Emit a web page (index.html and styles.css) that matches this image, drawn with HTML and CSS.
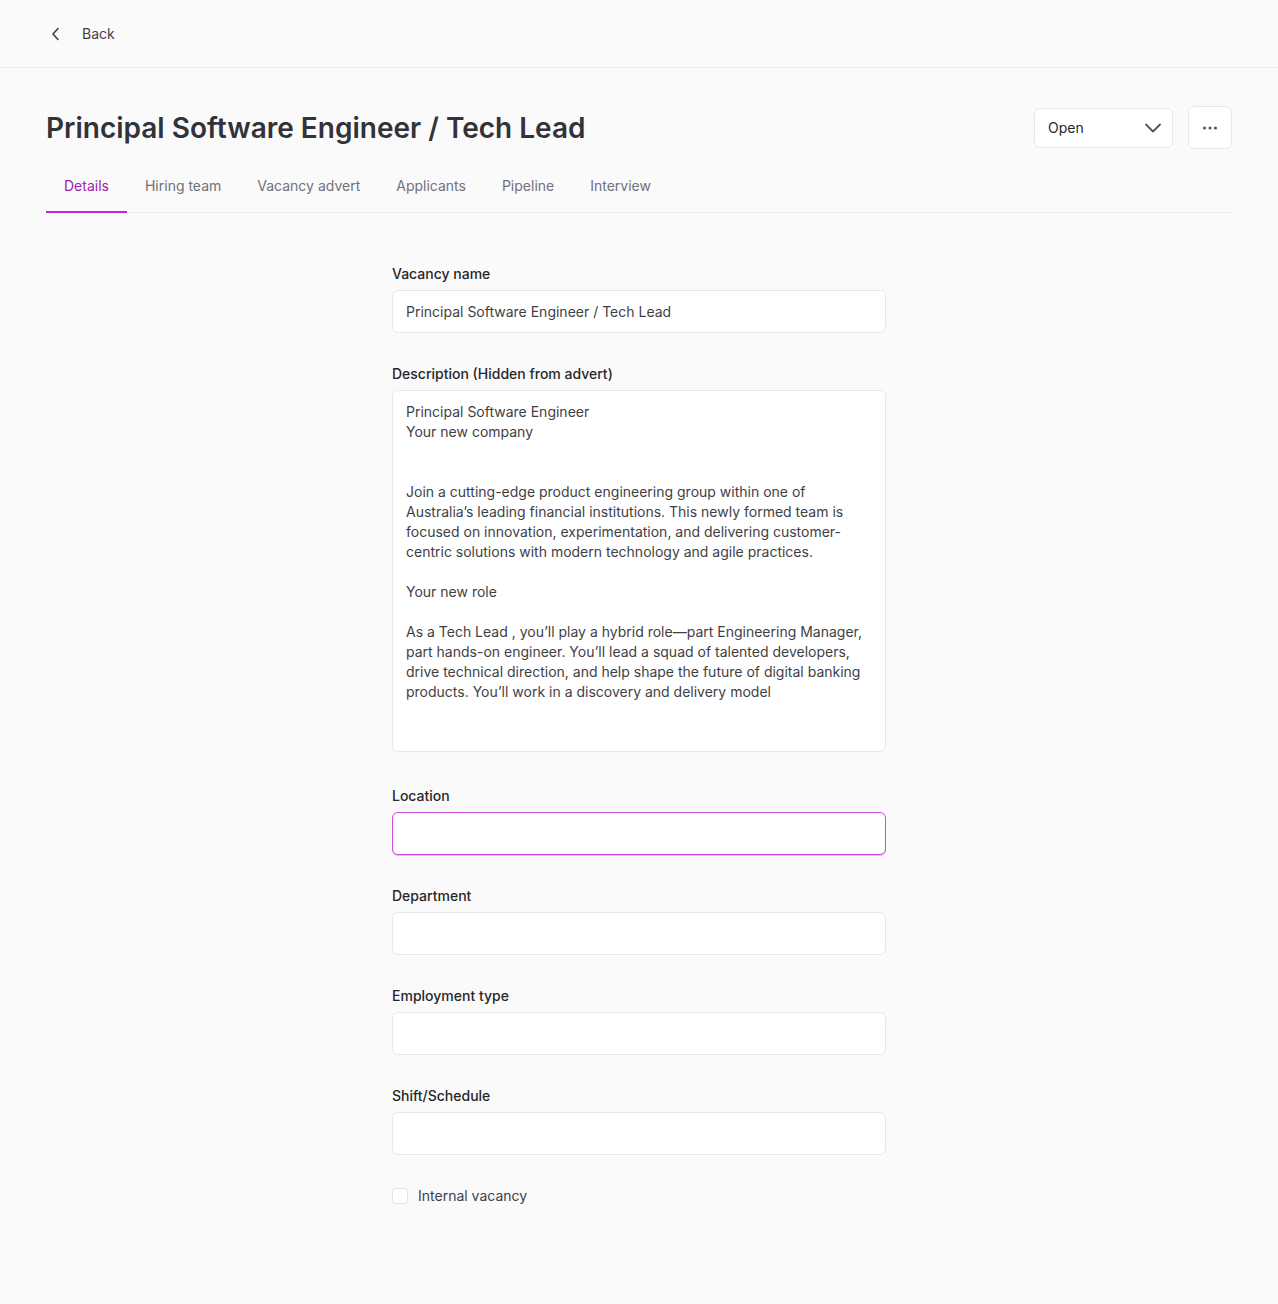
FILE: index.html
```html
<!DOCTYPE html>
<html lang="en">
<head>
    <meta charset="UTF-8">
    <meta name="viewport" content="width=device-width, initial-scale=1.0">
    <title>Principal Software Engineer / Tech Lead</title>
    <link rel="stylesheet" href="styles.css">
</head>
<body>
    <header class="topbar">
        <a class="back-link" href="#">
            <svg width="16" height="16" viewBox="0 0 16 16" fill="none" stroke="currentColor" stroke-width="1.6" stroke-linecap="round" stroke-linejoin="round">
                <path d="M10 2.5 L5 8 L10 13.5"/>
            </svg>
            <span>Back</span>
        </a>
    </header>

    <main class="page">
        <div class="title-row">
            <h1>Principal Software Engineer / Tech Lead</h1>
            <div class="title-actions">
                <button class="status-select">
                    <span>Open</span>
                    <svg width="20" height="20" viewBox="0 0 20 20" fill="none" stroke="currentColor" stroke-width="1.8" stroke-linecap="round" stroke-linejoin="round">
                        <path d="M3 6.5 L10 13.5 L17 6.5"/>
                    </svg>
                </button>
                <button class="more-button">
                    <svg width="16" height="4" viewBox="0 0 16 4" fill="currentColor">
                        <circle cx="2.5" cy="2" r="1.5"/>
                        <circle cx="8" cy="2" r="1.5"/>
                        <circle cx="13.5" cy="2" r="1.5"/>
                    </svg>
                </button>
            </div>
        </div>

        <nav class="tabs">
            <a class="tab active" href="#">Details</a>
            <a class="tab" href="#">Hiring team</a>
            <a class="tab" href="#">Vacancy advert</a>
            <a class="tab" href="#">Applicants</a>
            <a class="tab" href="#">Pipeline</a>
            <a class="tab" href="#">Interview</a>
        </nav>

        <form class="details-form">
            <div class="field">
                <label for="vacancyName">Vacancy name</label>
                <input type="text" id="vacancyName" value="Principal Software Engineer / Tech Lead">
            </div>

            <div class="field field-tall">
                <label for="description">Description (Hidden from advert)</label>
                <textarea id="description">Principal Software Engineer
Your new company


Join a cutting-edge product engineering group within one of Australia’s leading financial institutions. This newly formed team is focused on innovation, experimentation, and delivering customer-centric solutions with modern technology and agile practices.

Your new role

As a Tech Lead , you’ll play a hybrid role—part Engineering Manager, part hands-on engineer. You’ll lead a squad of talented developers, drive technical direction, and help shape the future of digital banking products. You’ll work in a discovery and delivery model</textarea>
            </div>

            <div class="field">
                <label for="location">Location</label>
                <input type="text" id="location" class="focused">
            </div>

            <div class="field">
                <label for="department">Department</label>
                <input type="text" id="department">
            </div>

            <div class="field">
                <label for="employmentType">Employment type</label>
                <input type="text" id="employmentType">
            </div>

            <div class="field">
                <label for="shift">Shift/Schedule</label>
                <input type="text" id="shift">
            </div>

            <label class="checkbox-row">
                <input type="checkbox" id="internal">
                <span>Internal vacancy</span>
            </label>
        </form>
    </main>
</body>
</html>
```

FILE: styles.css
```css
* {
    box-sizing: border-box;
}
body {
    margin: 0;
    background-color: #fafafa;
    font-family: Inter, "Noto Sans", sans-serif;
    font-size: 14px;
    color: #3f3f46;
}
.topbar {
    height: 68px;
    display: flex;
    align-items: center;
    padding-left: 48px;
    border-bottom: 1px solid #efeff1;
}
.back-link {
    display: flex;
    align-items: center;
    gap: 18px;
    color: #3f3f46;
    text-decoration: none;
    font-size: 14px;
}
.page {
    padding: 38px 46px 80px;
}
.title-row {
    display: flex;
    justify-content: space-between;
    align-items: center;
}
.title-row h1 {
    margin: 0;
    font-size: 28px;
    font-weight: 600;
    color: #323238;
}
.title-actions {
    display: flex;
    align-items: center;
    gap: 15px;
}
button {
    font-family: inherit;
    cursor: pointer;
}
.status-select {
    width: 139px;
    height: 40px;
    display: flex;
    align-items: center;
    justify-content: space-between;
    padding: 0 9px 0 13px;
    background-color: #fff;
    border: 1px solid #e8e8eb;
    border-radius: 6px;
    font-size: 14px;
    color: #27272a;
}
.status-select svg {
    color: #52525b;
}
.more-button {
    width: 44px;
    height: 43px;
    display: flex;
    align-items: center;
    justify-content: center;
    background-color: #fff;
    border: 1px solid #e8e8eb;
    border-radius: 6px;
    color: #52525b;
}
.tabs {
    display: flex;
    margin-top: 15px;
    border-bottom: 1px solid #efeff1;
}
.tab {
    padding: 12px 18px 15px;
    line-height: 20px;
    font-size: 14px;
    color: #71717a;
    text-decoration: none;
    border-bottom: 2px solid transparent;
    margin-bottom: -1px;
}
.tab.active {
    color: #a21caf;
    border-bottom-color: #c026d3;
}
.details-form {
    width: 494px;
    margin: 53px auto 0;
    display: flex;
    flex-direction: column;
    gap: 33px;
}
.field {
    display: flex;
    flex-direction: column;
}
.field-tall {
    margin-bottom: 3px;
}
.field label {
    line-height: 16px;
    margin-bottom: 8px;
    font-size: 14px;
    font-weight: 500;
    color: #27272a;
}
.field input,
.field textarea {
    width: 100%;
    background-color: #fff;
    border: 1px solid #e8e8eb;
    border-radius: 6px;
    font-family: inherit;
    font-size: 14px;
    color: #3f3f46;
    outline: none;
}
.field input {
    height: 43px;
    padding: 0 13px;
}
.field textarea {
    height: 362px;
    padding: 11px 13px;
    line-height: 20px;
    resize: none;
    overflow: hidden;
}
.field input.focused {
    border-color: #c64fd4;
    box-shadow: 0 1px 0 #eab4ee;
}
.checkbox-row {
    display: flex;
    align-items: center;
    gap: 10px;
    margin-top: -1px;
    font-size: 14px;
    color: #3f3f46;
}
.checkbox-row input {
    appearance: none;
    margin: 0;
    width: 16px;
    height: 16px;
    background-color: #fff;
    border: 1px solid #e4e4e7;
    border-radius: 4px;
}
```
